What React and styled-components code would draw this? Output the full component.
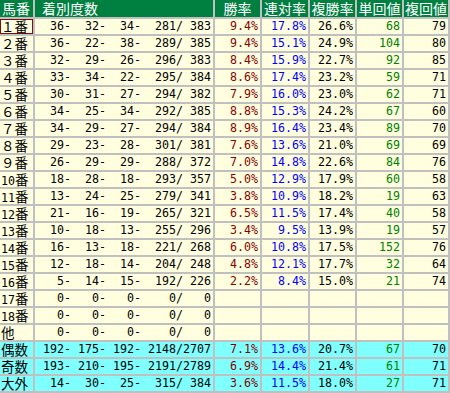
import React from 'react';
import styled, { createGlobalStyle } from 'styled-components';

const GlobalStyle = createGlobalStyle`
  body {
    margin: 0;
    background: #ffffff;
  }
`;

const Table = styled.div`
  display: grid;
  grid-template-columns: 33px 178px 45px 46px 45px 45px 44px;
  grid-auto-rows: 15px;
  grid-template-rows: 17px;
  gap: 2px;
  width: 448px;
  padding: 0 2px 2px 0;
  background: #c0c0c0;
`;

const HeadCell = styled.div`
  background: #008040;
  color: #ffffff;
  font-family: "Noto Sans CJK JP", sans-serif;
  font-size: 14px;
  line-height: 17px;
  white-space: nowrap;
  text-align: ${(p) => p.$align || 'center'};
  padding-left: ${(p) => p.$indent || 0}px;
`;

const Cell = styled.div`
  background: ${(p) => (p.$cyan ? '#80ffff' : '#ffffe0')};
  color: ${(p) => p.$color || '#000000'};
  font-family: "DejaVu Sans Mono", monospace;
  font-size: 11.63px;
  line-height: 15px;
  white-space: pre;
  text-align: right;
  padding-right: 2px;
`;

const LabelCell = styled.div`
  background: ${(p) => (p.$cyan ? '#80ffff' : '#ffffe0')};
  color: #000000;
  font-family: "Noto Sans CJK JP", sans-serif;
  font-size: 13.5px;
  line-height: 15px;
  white-space: nowrap;
  padding-left: 1px;
  box-shadow: ${(p) => (p.$selected ? 'inset 0 0 0 1px #7a1010' : 'none')};
`;

const Digits = styled.span`
  font-family: "DejaVu Sans Mono", monospace;
  font-size: 11.63px;
`;

const pad = (n, w) => String(n).padStart(w, ' ');
const counts = (a, b, c, d, e) =>
  `${pad(a, 3)}-${pad(b, 4)}-${pad(c, 4)}-${pad(d, 5)}/${pad(e, 4)}`;

const rows = [
  { label: '１番', c: [36, 32, 34, 281, 383], win: '9.4%', ren: '17.8%', fuku: '26.6%', tan: '68', fk: '79' },
  { label: '２番', c: [36, 22, 38, 289, 385], win: '9.4%', ren: '15.1%', fuku: '24.9%', tan: '104', fk: '80' },
  { label: '３番', c: [32, 29, 26, 296, 383], win: '8.4%', ren: '15.9%', fuku: '22.7%', tan: '92', fk: '85' },
  { label: '４番', c: [33, 34, 22, 295, 384], win: '8.6%', ren: '17.4%', fuku: '23.2%', tan: '59', fk: '71' },
  { label: '５番', c: [30, 31, 27, 294, 382], win: '7.9%', ren: '16.0%', fuku: '23.0%', tan: '62', fk: '71' },
  { label: '６番', c: [34, 25, 34, 292, 385], win: '8.8%', ren: '15.3%', fuku: '24.2%', tan: '67', fk: '60' },
  { label: '７番', c: [34, 29, 27, 294, 384], win: '8.9%', ren: '16.4%', fuku: '23.4%', tan: '89', fk: '70' },
  { label: '８番', c: [29, 23, 28, 301, 381], win: '7.6%', ren: '13.6%', fuku: '21.0%', tan: '69', fk: '69' },
  { label: '９番', c: [26, 29, 29, 288, 372], win: '7.0%', ren: '14.8%', fuku: '22.6%', tan: '84', fk: '76' },
  { num: '10', c: [18, 28, 18, 293, 357], win: '5.0%', ren: '12.9%', fuku: '17.9%', tan: '60', fk: '58' },
  { num: '11', c: [13, 24, 25, 279, 341], win: '3.8%', ren: '10.9%', fuku: '18.2%', tan: '19', fk: '63' },
  { num: '12', c: [21, 16, 19, 265, 321], win: '6.5%', ren: '11.5%', fuku: '17.4%', tan: '40', fk: '58' },
  { num: '13', c: [10, 18, 13, 255, 296], win: '3.4%', ren: '9.5%', fuku: '13.9%', tan: '19', fk: '57' },
  { num: '14', c: [16, 13, 18, 221, 268], win: '6.0%', ren: '10.8%', fuku: '17.5%', tan: '152', fk: '76' },
  { num: '15', c: [12, 18, 14, 204, 248], win: '4.8%', ren: '12.1%', fuku: '17.7%', tan: '32', fk: '64' },
  { num: '16', c: [5, 14, 15, 192, 226], win: '2.2%', ren: '8.4%', fuku: '15.0%', tan: '21', fk: '74' },
  { num: '17', c: [0, 0, 0, 0, 0] },
  { num: '18', c: [0, 0, 0, 0, 0] },
  { label: '他', c: [0, 0, 0, 0, 0] },
  { label: '偶数', cyan: true, c: [192, 175, 192, 2148, 2707], win: '7.1%', ren: '13.6%', fuku: '20.7%', tan: '67', fk: '70' },
  { label: '奇数', cyan: true, c: [193, 210, 195, 2191, 2789], win: '6.9%', ren: '14.4%', fuku: '21.4%', tan: '61', fk: '71' },
  { label: '大外', cyan: true, c: [14, 30, 25, 315, 384], win: '3.6%', ren: '11.5%', fuku: '18.0%', tan: '27', fk: '71' },
];

const headers = ['勝率', '連対率', '複勝率', '単回値', '複回値'];

const App = () => {
  return (
    <>
      <GlobalStyle />
      <Table>
        <HeadCell $align="left" $indent={2}>馬番</HeadCell>
        <HeadCell $align="left" $indent={7}>着別度数</HeadCell>
        {headers.map((h) => (
          <HeadCell key={h}>{h}</HeadCell>
        ))}
        {rows.map((r, i) => (
          <React.Fragment key={i}>
            <LabelCell $cyan={r.cyan} $selected={i === 0}>
              {r.num ? (
                <>
                  <Digits>{r.num}</Digits>番
                </>
              ) : (
                r.label
              )}
            </LabelCell>
            <Cell $cyan={r.cyan}>{counts(...r.c)}</Cell>
            <Cell $cyan={r.cyan} $color="#880000">{r.win || ''}</Cell>
            <Cell $cyan={r.cyan} $color="#0000ff">{r.ren || ''}</Cell>
            <Cell $cyan={r.cyan}>{r.fuku || ''}</Cell>
            <Cell $cyan={r.cyan} $color="#008000">{r.tan || ''}</Cell>
            <Cell $cyan={r.cyan}>{r.fk || ''}</Cell>
          </React.Fragment>
        ))}
      </Table>
    </>
  );
};

export default App;
